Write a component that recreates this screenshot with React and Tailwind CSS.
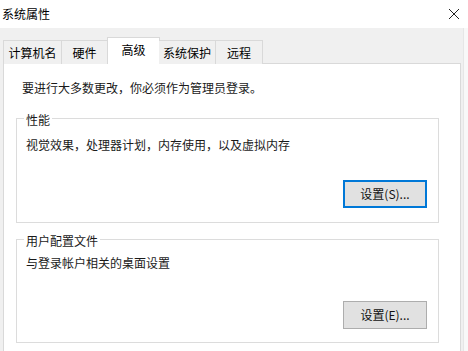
import React from "react";

const font = { fontFamily: '"Noto Sans CJK SC", "Noto Sans", sans-serif' };

const tabs = ["计算机名", "硬件", "高级", "系统保护", "远程"];

const GroupBox = ({ title, text, button, focused, className, labelClass, textClass }) => (
  <div className={`ml-[12px] mr-[21px] border border-[#dcdcdc] flex flex-col ${className}`}>
    <span
      className={`ml-[7px] w-fit px-[2px] bg-white text-[12px] leading-[16px] text-[#1a1a1a] ${labelClass}`}
    >
      {title}
    </span>
    <div className={`pl-[9px] text-[12px] leading-[16px] text-[#1a1a1a] ${textClass}`}>{text}</div>
    <div className="mt-auto flex justify-end pr-[11px]">
      <button
        className={`h-[28px] w-[84px] text-[12px] text-[#111] bg-[#e1e1e1] ${
          focused ? "border-2 border-[#0078d7]" : "border border-[#adadad]"
        }`}
      >
        {button}
      </button>
    </div>
  </div>
);

const App = () => {
  return (
    <div className="w-[468px] h-[351px] bg-white flex flex-col overflow-hidden" style={font}>
      {/* Title bar */}
      <div className="h-[28px] flex items-center justify-between pl-[2px] pr-[6px] bg-white">
        <span className="text-[12px] text-black">系统属性</span>
        <svg width="12" height="12" viewBox="0 0 12 12" className="mr-[2px]">
          <path d="M1 1L11 11M11 1L1 11" stroke="#222" strokeWidth="1" />
        </svg>
      </div>

      <div className="flex-1 flex min-h-0">
        <div className="flex-1 bg-[#f0f0f0] flex flex-col pl-[3px] pr-[2px] pt-[9px]">
          {/* Tabs */}
          <div className="flex items-end h-[27px] relative z-10">
            {tabs.map((t, i) =>
              t === "高级" ? (
                <div
                  key={t}
                  className="h-[27px] w-[53px] -mx-[1px] bg-white border border-b-0 border-[#d9d9d9] flex items-center justify-center text-[12px] text-black pb-[2px]"
                >
                  {t}
                </div>
              ) : (
                <div
                  key={t}
                  className={`h-[24px] bg-[#f0f0f0] border border-b-0 border-[#d9d9d9] flex items-center justify-center text-[12px] text-black ${
                    i === 0 ? "w-[59px]" : i === 1 ? "w-[46px] border-l-0" : i === 3 ? "w-[57px] border-l-0" : "w-[47px] border-l-0"
                  }`}
                >
                  {t}
                </div>
              )
            )}
          </div>

          {/* Panel */}
          <div className="flex-1 -mt-[1px] bg-white border border-b-0 border-[#d9d9d9]">
            <div className="pl-[18px] pt-[16px] text-[12px] leading-[16px] text-[#1a1a1a]">
              要进行大多数更改，你必须作为管理员登录。
            </div>
            <GroupBox
              className="mt-[22px] h-[105px] pb-[14px]"
              labelClass="-mt-[7px]"
              textClass="mt-[9px]"
              title="性能"
              text="视觉效果，处理器计划，内存使用，以及虚拟内存"
              button="设置(S)..."
              focused
            />
            <GroupBox
              className="mt-[16px] h-[104px] pb-[13px]"
              labelClass="-mt-[7px]"
              textClass="mt-[6px]"
              title="用户配置文件"
              text="与登录帐户相关的桌面设置"
              button="设置(E)..."
            />
          </div>
        </div>
        <div className="w-[5px] bg-[#f8f8f8] border-l border-[#e6e6e6]" />
      </div>
    </div>
  );
};

export default App;
